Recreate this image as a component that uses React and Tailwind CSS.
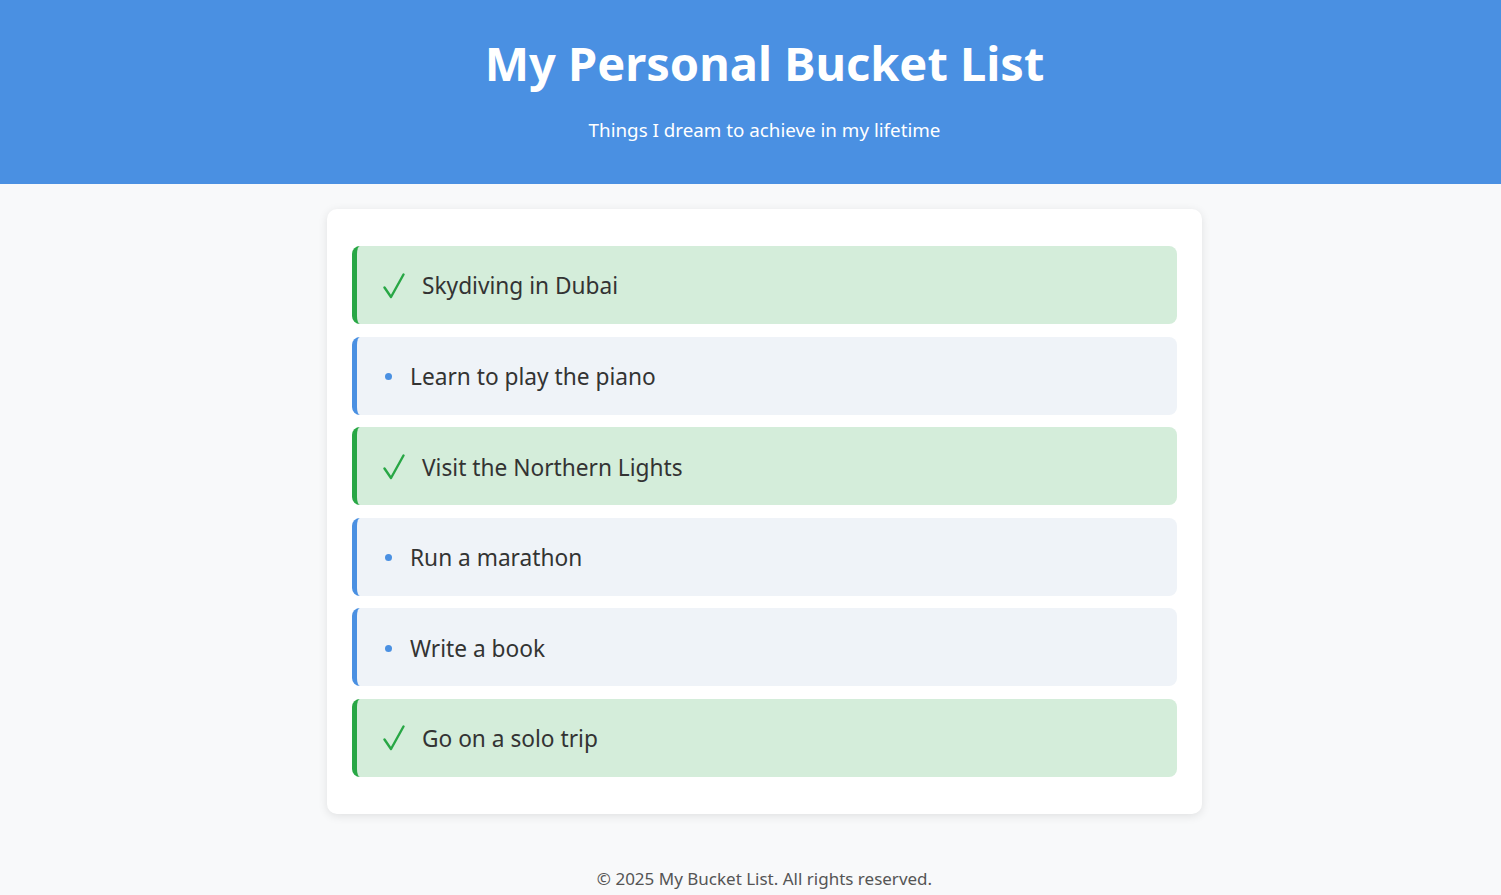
export default function App() {
  const items = [
    { t: "Skydiving in Dubai", done: true },
    { t: "Learn to play the piano", done: false },
    { t: "Visit the Northern Lights", done: true },
    { t: "Run a marathon", done: false },
    { t: "Write a book", done: false },
    { t: "Go on a solo trip", done: true },
  ];
  return (
    <div className="min-h-screen bg-[#f8f9fa] text-[#333]" style={{ fontFamily: '"Noto Sans", "Open Sans", sans-serif' }}>
      <header className="bg-[#4a90e2] text-white text-center h-[184px] flex flex-col items-center pt-[30px] pl-[28px]">
        <h1 className="text-[47px] font-bold leading-[66px]">My Personal Bucket List</h1>
        <p className="text-[18.8px] mt-[20px] leading-[28px]">Things I dream to achieve in my lifetime</p>
      </header>
      <div className="pl-[28px]">
        <main className="w-[875px] mx-auto mt-[25px] bg-white rounded-[10px] shadow-[0_2px_10px_rgba(0,0,0,0.1)] px-[25px] pt-[37px] pb-[37px]">
          <ul className="flex flex-col gap-[12.6px]">
            {items.map((it) => (
              <li
                key={it.t}
                className={
                  it.done
                    ? "h-[78px] flex items-center rounded-[8px] border-l-[5px] border-[#28a745] bg-[#d4edda] pl-[26px] pt-[3px]"
                    : "h-[78px] flex items-center rounded-[8px] border-l-[5px] border-[#4a90e2] bg-[#eff3f8] pl-[28px] pt-[3px]"
                }
              >
                {it.done ? (
                  <svg width="22" height="26" viewBox="0 0 22 26" className="mr-[17px] shrink-0 -mt-[2px]" fill="none">
                    <path d="M1.5 14.5 L8 24 L20.5 1.5" stroke="#28a745" strokeWidth="2.4" strokeLinecap="round" strokeLinejoin="round" />
                  </svg>
                ) : (
                  <span className="w-[7px] h-[7px] rounded-full bg-[#4a90e2] mr-[18px] shrink-0 -mt-[1px]" />
                )}
                <span className="text-[22.7px] text-[#333]">{it.t}</span>
              </li>
            ))}
          </ul>
        </main>
        <footer className="text-center text-[#555] text-[17px] pt-[52px] pb-[20px]">© 2025 My Bucket List. All rights reserved.</footer>
      </div>
    </div>
  );
}
